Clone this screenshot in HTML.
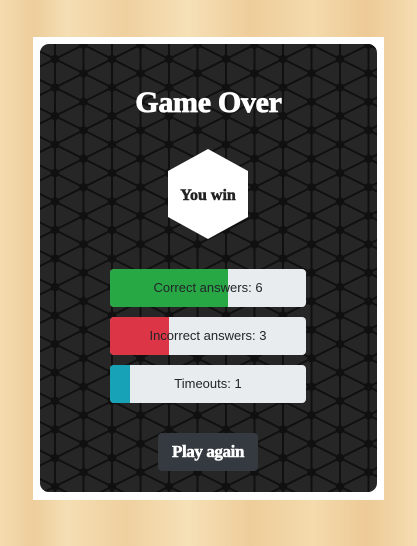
<!DOCTYPE html>
<html><head><style>
html,body{margin:0;padding:0;width:417px;height:546px;overflow:hidden;background:#efcf9c;}
body{background:linear-gradient(90deg,#f4dcb0 0,#edcd9b 8%,#f5deb3 16%,#efd09f 30%,#f6e0b6 45%,#eecd9a 60%,#f4daac 75%,#edca96 88%,#f5ddb2 100%);}
.frame{position:absolute;left:33px;top:37px;width:351px;height:463px;background:#fff;}
.card{position:absolute;left:40px;top:44px;width:337px;height:448px;border-radius:9px;overflow:hidden;background:#262626;}
.card svg{position:absolute;left:0;top:0;}
h1{position:absolute;left:0;width:337px;top:42px;margin:0;text-align:center;color:#fff;font:900 30px "Liberation Serif",serif;letter-spacing:-0.3px;-webkit-text-stroke:0.8px #fff;}
.bar{position:absolute;left:70px;width:196px;height:38px;border-radius:4px;background:#e9ecef;overflow:hidden;}
.bar .f{position:absolute;left:0;top:0;bottom:0;}
.bar span{position:absolute;left:0;right:0;top:11px;text-align:center;font:13px "Liberation Sans",sans-serif;color:#212529;}
.btn{position:absolute;left:118px;top:389px;width:100px;height:38px;border-radius:4px;background:#343a40;color:#fff;text-align:center;font:900 17px/38px "Liberation Serif",serif;letter-spacing:-0.4px;-webkit-text-stroke:0.5px #fff;}
</style></head><body>
<div class="frame"></div>
<div class="card">
<svg width="337" height="448">
<defs><pattern id="p" x="15" y="15" width="57" height="28.5" patternUnits="userSpaceOnUse">
<g stroke="#101010" stroke-width="2" fill="none">
<path d="M0 0L28.5 14.25L57 0M0 28.5L28.5 14.25L57 28.5M0 0V28.5M57 0V28.5M28.5 0V28.5"/>
<circle cx="0" cy="0" r="3.3"/><circle cx="57" cy="0" r="3.3"/><circle cx="0" cy="28.5" r="3.3"/><circle cx="57" cy="28.5" r="3.3"/><circle cx="28.5" cy="14.25" r="3.3"/>
</g></pattern></defs>
<rect width="337" height="448" fill="url(#p)"/>
<polygon points="168,105 208,127 208,173 168,195 128,173 128,127" fill="#fff"/>
<text x="168" y="156" text-anchor="middle" font-family="Liberation Serif,serif" font-weight="900" font-size="16" fill="#222" stroke="#222" stroke-width="0.5">You win</text>
</svg>
<h1>Game Over</h1>
<div class="bar" style="top:225px"><div class="f" style="width:118px;background:#28a745"></div><span>Correct answers: 6</span></div>
<div class="bar" style="top:273px"><div class="f" style="width:59px;background:#dc3545"></div><span>Incorrect answers: 3</span></div>
<div class="bar" style="top:321px"><div class="f" style="width:20px;background:#17a2b8"></div><span>Timeouts: 1</span></div>
<div class="btn">Play again</div>
</div>
</body></html>
